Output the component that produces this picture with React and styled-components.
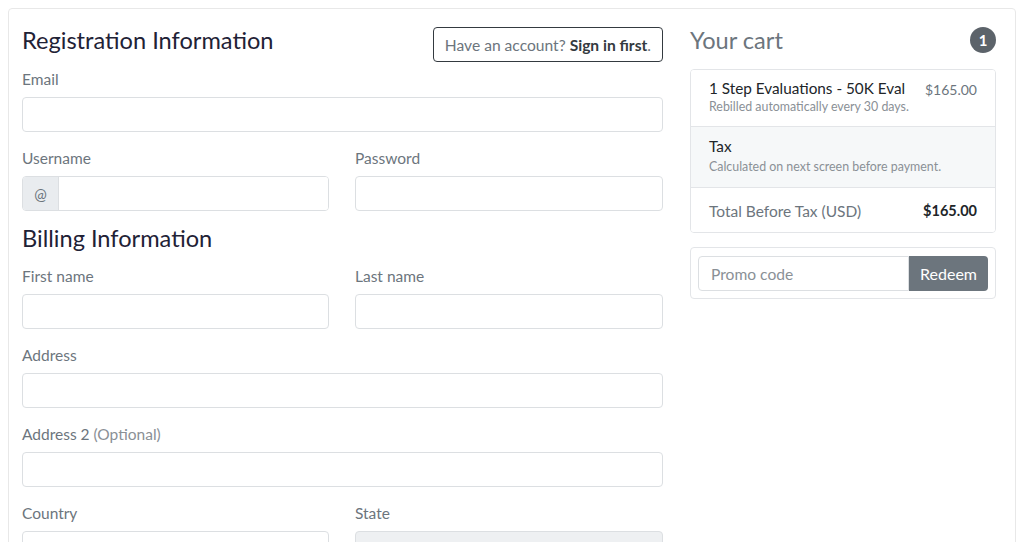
import styled, { createGlobalStyle } from 'styled-components'

const GlobalStyle = createGlobalStyle`
  * { box-sizing: border-box; }
  body {
    margin: 8px;
    font-family: Lato, "Noto Sans", sans-serif;
    color: #212529;
    background: #fff;
  }
`

const Card = styled.div`
  border: 1px solid #e8e8e8;
  border-radius: 4px;
  padding: 17px 19px 40px 13px;
  display: grid;
  grid-template-columns: 641px 306px;
  column-gap: 27px;
  height: 560px;
  overflow: hidden;
`

const Column = styled.div`
  display: flex;
  flex-direction: column;
`

const HeadRow = styled.div`
  display: flex;
  justify-content: space-between;
  align-items: flex-start;
  height: 36px;
  margin-bottom: ${p => p.tight ? 6 : 7}px;
`

const Heading = styled.h4`
  margin: 0;
  font-size: 23.6px;
  font-weight: 400;
  color: ${p => p.muted ? '#6c757d' : '#1f2236'};
  line-height: 28px;
`

const OutlineButton = styled.button`
  font-family: inherit;
  font-size: 15.6px;
  color: #6c757d;
  background: #fff;
  border: 1px solid #343a40;
  border-radius: 4px;
  height: 35px;
  margin-top: 1px;
  padding: 0 11px;
  b { color: #343a40; font-weight: 700; }
`

const Row = styled.div`
  display: grid;
  grid-template-columns: 307px 308px;
  column-gap: 26px;
`

const Group = styled.div`
  margin-bottom: 16px;
`

const Label = styled.label`
  display: block;
  font-size: 15.5px;
  line-height: 21px;
  color: #6c757d;
  margin-bottom: 7px;
  span { color: #8a9096; }
`

const Input = styled.input`
  display: block;
  width: 100%;
  height: 35px;
  border: 1px solid #dcdfe2;
  border-radius: 4px;
  background: ${p => p.disabled ? '#eef0f2' : '#fff'};
  font-family: inherit;
  font-size: 15.5px;
  padding: 0 12px;
  outline: none;
`

const InputGroup = styled.div`
  display: flex;
  height: 35px;
  border: 1px solid #dcdfe2;
  border-radius: 4px;
  overflow: hidden;
  input { border: none; border-radius: 0; height: 33px; }
`

const Addon = styled.span`
  width: 36px;
  flex: none;
  display: flex;
  align-items: center;
  justify-content: center;
  background: #e9ecef;
  border-right: 1px solid #dcdfe2;
  color: #6c757d;
  font-size: 15px;
`

const SubHeading = styled(Heading)`
  margin: -3px 0 14px;
`

const Badge = styled.span`
  width: 26px;
  height: 26px;
  margin-top: 1px;
  border-radius: 50%;
  background: #5c636a;
  color: #fff;
  font-weight: 700;
  font-size: 15px;
  display: flex;
  align-items: center;
  justify-content: center;
`

const List = styled.ul`
  list-style: none;
  margin: 1px 0 14px;
  padding: 0;
  border: 1px solid #e3e5e8;
  border-radius: 4px;
  overflow: hidden;
`

const Item = styled.li`
  display: flex;
  justify-content: space-between;
  align-items: ${p => p.center ? 'center' : 'flex-start'};
  padding: ${p => p.pad || '8px 18px 11px 18px'};
  background: ${p => p.shade ? '#f6f8f9' : '#fff'};
  border-top: ${p => p.first ? 'none' : '1px solid #e3e5e8'};
`

const Title = styled.div`
  font-size: ${p => p.muted ? 15.5 : 15.3}px;
  line-height: 20px;
  color: ${p => p.muted ? '#6c757d' : '#212529'};
`

const Small = styled.div`
  font-size: 12.4px;
  line-height: 16px;
  color: #8a9096;
  margin-top: ${p => p.gap || 1}px;
`

const Price = styled.span`
  font-size: ${p => p.bold ? 14.5 : 14}px;
  line-height: 20px;
  color: ${p => p.bold ? '#212529' : '#6c757d'};
  font-weight: ${p => p.bold ? 700 : 400};
  margin-top: ${p => p.bold ? 0 : 2}px;
`

const PromoCard = styled.form`
  display: flex;
  padding: 8px 7px 7px 7px;
  border: 1px solid #e3e5e8;
  border-radius: 4px;
`

const PromoInput = styled(Input)`
  flex: 1;
  border-radius: 4px 0 0 4px;
  font-size: 15.6px;
  &::placeholder { color: #8a9096; }
`

const RedeemButton = styled.button`
  font-family: inherit;
  font-size: 16px;
  color: #fff;
  background: #6c757d;
  border: none;
  border-radius: 0 4px 4px 0;
  width: 79px;
  height: 35px;
`

export default function App() {
  return (
    <>
      <GlobalStyle />
      <Card>
        <Column>
          <HeadRow>
            <Heading>Registration Information</Heading>
            <OutlineButton type="button">Have an account? <b>Sign in first</b>.</OutlineButton>
          </HeadRow>
          <Group>
            <Label>Email</Label>
            <Input />
          </Group>
          <Row>
            <Group>
              <Label>Username</Label>
              <InputGroup>
                <Addon>@</Addon>
                <Input />
              </InputGroup>
            </Group>
            <Group>
              <Label>Password</Label>
              <Input type="password" />
            </Group>
          </Row>
          <SubHeading>Billing Information</SubHeading>
          <Row>
            <Group>
              <Label>First name</Label>
              <Input />
            </Group>
            <Group>
              <Label>Last name</Label>
              <Input />
            </Group>
          </Row>
          <Group>
            <Label>Address</Label>
            <Input />
          </Group>
          <Group>
            <Label>Address 2 <span>(Optional)</span></Label>
            <Input />
          </Group>
          <Row>
            <Group>
              <Label>Country</Label>
              <Input />
            </Group>
            <Group>
              <Label>State</Label>
              <Input disabled />
            </Group>
          </Row>
        </Column>
        <Column>
          <HeadRow tight>
            <Heading muted>Your cart</Heading>
            <Badge>1</Badge>
          </HeadRow>
          <List>
            <Item first>
              <div>
                <Title>1 Step Evaluations - 50K Eval</Title>
                <Small>Rebilled automatically every 30 days.</Small>
              </div>
              <Price>$165.00</Price>
            </Item>
            <Item shade pad="9px 18px 12px 18px">
              <div>
                <Title>Tax</Title>
                <Small gap={3}>Calculated on next screen before payment.</Small>
              </div>
            </Item>
            <Item center pad="13px 18px 11px 18px">
              <Title muted>Total Before Tax (USD)</Title>
              <Price bold>$165.00</Price>
            </Item>
          </List>
          <PromoCard onSubmit={e => e.preventDefault()}>
            <PromoInput placeholder="Promo code" />
            <RedeemButton type="submit">Redeem</RedeemButton>
          </PromoCard>
        </Column>
      </Card>
    </>
  )
}
